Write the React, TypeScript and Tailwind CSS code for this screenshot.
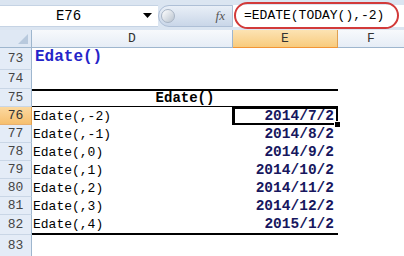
import React from "react";

const mono = { fontFamily: '"Liberation Mono", "DejaVu Sans Mono", monospace' };

type Row = { n: number; label: string; date: string };

const rows: Row[] = [
  { n: 76, label: "Edate(,-2)", date: "2014/7/2" },
  { n: 77, label: "Edate(,-1)", date: "2014/8/2" },
  { n: 78, label: "Edate(,0)", date: "2014/9/2" },
  { n: 79, label: "Edate(,1)", date: "2014/10/2" },
  { n: 80, label: "Edate(,2)", date: "2014/11/2" },
  { n: 81, label: "Edate(,3)", date: "2014/12/2" },
  { n: 82, label: "Edate(,4)", date: "2015/1/2" },
];

function RowHead({ n, active }: { n: number; active?: boolean }) {
  return (
    <div
      className={
        "w-[32px] shrink-0 flex items-center justify-center border-r border-b text-[13px] " +
        (active
          ? "bg-gradient-to-b from-[#fbd9a0] to-[#f6bf6e] border-r-[#e0a050] border-b-[#e8b070] text-[#333]"
          : "bg-[#e4ecf7] border-r-[#9eb6ce] border-b-[#c9d6e6] text-[#444]")
      }
    >
      {n}
    </div>
  );
}

export default function App() {
  return (
    <div className="relative w-[404px] h-[256px] overflow-hidden bg-white text-black" style={mono}>
      {/* formula bar */}
      <div className="h-[30px] bg-[#dbe5f1] pt-[5px] pb-[3px] flex">
        <div className="w-[158px] h-[22px] bg-white flex items-center border-y border-[#c5d3e4]">
          <div className="w-[137px] text-center text-[14px]">E76</div>
          <svg width="9" height="6" viewBox="0 0 9 6" className="ml-[6px]">
            <path d="M0 0h9L4.5 5z" fill="#000" />
          </svg>
        </div>
        <div className="w-[75px] h-[22px] flex items-center rounded-l-full bg-gradient-to-b from-[#e9eff7] to-[#c9d6e8] border border-[#aebfd6] pl-[2px]">
          <div className="w-[14px] h-[14px] rounded-full bg-gradient-to-br from-white to-[#b9c3cf] border border-[#a8b4c4]" />
          <span className="ml-auto mr-[7px] italic text-[#555] text-[13px]" style={{ fontFamily: '"Liberation Serif", serif' }}>
            fx
          </span>
        </div>
        <div className="flex-1 h-[22px] bg-white flex items-center pl-[11px] text-[13px]">=EDATE(TODAY(),-2)</div>
      </div>

      {/* column headers */}
      <div className="flex h-[18px]">
        <div className="w-[32px] shrink-0 bg-[#dfe8f4] border-r border-b border-[#9eb6ce] relative">
          <svg width="10" height="10" viewBox="0 0 10 10" className="absolute right-[3px] bottom-[3px]">
            <path d="M10 0v10H0z" fill="#b8c9dd" />
          </svg>
        </div>
        <div className="w-[201px] shrink-0 bg-gradient-to-b from-[#f7f9fc] to-[#e6edf6] border-r border-b border-[#9eb6ce] flex items-center justify-center text-[13px] text-[#333]">
          D
        </div>
        <div className="w-[105px] shrink-0 bg-gradient-to-b from-[#fce3b3] to-[#f8cb7c] border-r border-[#e0a050] border-b border-b-[#f29536] flex items-center justify-center text-[13px] text-[#333]">
          E
        </div>
        <div className="flex-1 bg-gradient-to-b from-[#f7f9fc] to-[#e6edf6] border-b border-[#9eb6ce] flex items-center justify-center text-[13px] text-[#333]">
          F
        </div>
      </div>

      {/* row 73 */}
      <div className="flex h-[22px]">
        <RowHead n={73} />
        <div className="flex-1 flex items-end pl-[3px] pb-[1px] text-[16px] font-bold text-[#2424c8]">Edate()</div>
      </div>
      {/* row 74 */}
      <div className="flex h-[19px]">
        <RowHead n={74} />
        <div className="flex-1" />
      </div>
      {/* row 75 */}
      <div className="flex h-[18px]">
        <RowHead n={75} />
        <div className="w-[306px] shrink-0 border-t-2 border-t-black border-b border-b-black flex items-center justify-center text-[14px] font-bold">
          Edate()
        </div>
      </div>

      {rows.map((r, i) => {
        const last = r.n === 82;
        return (
          <div key={r.n} className={"flex " + (last ? "h-[20px]" : "h-[18px]")}>
            <RowHead n={r.n} active={i === 0} />
            <div className={"w-[306px] shrink-0 flex " + (last ? "border-b-2 border-black" : "")}>
              <div className="w-[201px] shrink-0 flex items-end pl-[1px] text-[13px] leading-[17px]">{r.label}</div>
              <div className="relative flex-1 flex items-end justify-end pr-[4px] text-[14.5px] leading-[17px] font-bold text-[#17175e]">
                {r.date}
                {i === 0 && (
                  <>
                    <div className="absolute -left-[1px] top-0 right-0 bottom-0 border-2 border-l-[3px] border-black" />
                    <div className="absolute -right-[2px] -bottom-[2px] w-[5px] h-[5px] bg-black outline outline-1 outline-white" />
                  </>
                )}
              </div>
            </div>
          </div>
        );
      })}

      {/* row 83 */}
      <div className="flex h-[22px]">
        <RowHead n={83} />
        <div className="flex-1" />
      </div>

      {/* red annotation around formula */}
      <div className="absolute left-[234px] top-[2px] w-[165px] h-[27px] rounded-[14px] border-2 border-[#d23a3a]" />
    </div>
  );
}
